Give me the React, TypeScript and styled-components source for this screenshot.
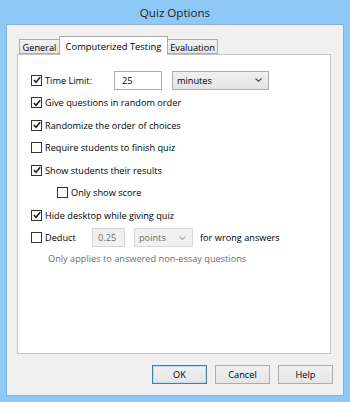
import styled, { createGlobalStyle } from 'styled-components';

const GlobalStyle = createGlobalStyle`
  html, body {
    margin: 0;
    padding: 0;
    background: #8ec8f7;
  }
  * {
    box-sizing: border-box;
  }
`;

const FONT = `"Open Sans", "Noto Sans", "DejaVu Sans", sans-serif`;

const Window = styled.div`
  display: flex;
  flex-direction: column;
  width: 350px;
  height: 402px;
  background: #8ec8f7;
  padding: 0 6px 6px 6px;
  font-family: ${FONT};
  font-size: 9.2px;
  color: #000;
`;

const TitleBar = styled.div`
  display: flex;
  align-items: center;
  justify-content: center;
  height: 24px;
  font-size: 11.6px;
  color: #1f1f1f;
  padding-top: 1px;
`;

const Client = styled.div`
  display: flex;
  flex-direction: column;
  flex: 1;
  background: #f0f0f0;
  border: 1px solid #7eb2df;
  padding: 11px 12px 0 10px;
`;

const TabStrip = styled.div`
  display: flex;
  align-items: flex-end;
  height: 18px;
  padding-left: 2px;
  position: relative;
  z-index: 1;
`;

const Tab = styled.div<{ $active?: boolean; $width: number }>`
  display: flex;
  align-items: center;
  justify-content: center;
  width: ${({ $width }) => $width}px;
  height: ${({ $active }) => ($active ? '19px' : '15px')};
  margin-bottom: ${({ $active }) => ($active ? '-1px' : '0')};
  background: ${({ $active }) => ($active ? '#fff' : 'linear-gradient(#f2f2f2, #e5e5e5)')};
  border: 1px solid #acacac;
  border-bottom: ${({ $active }) => ($active ? 'none' : '1px solid #acacac')};
  margin-left: ${({ $active }) => ($active ? '-1px' : '0')};
  margin-right: ${({ $active }) => ($active ? '-1px' : '0')};
  white-space: nowrap;
  padding-top: ${({ $active }) => ($active ? '0' : '2px')};
  font-size: ${({ $active }) => ($active ? '9.4px' : '9.2px')};
`;

const Panel = styled.div`
  display: flex;
  flex-direction: column;
  height: 300px;
  background: #fff;
  border: 1px solid #c4c4c4;
  padding: 14px 0 0 13px;
`;

const Row = styled.div<{ $indent?: number }>`
  display: flex;
  align-items: center;
  height: 22.5px;
  padding-left: ${({ $indent }) => $indent ?? 0}px;
  white-space: nowrap;
`;

const Box = styled.span`
  display: inline-flex;
  align-items: center;
  justify-content: center;
  width: 11px;
  height: 11px;
  border: 1px solid #333;
  background: #fff;
  margin-right: 3px;
  flex: none;
`;

const Label = styled.span<{ $width?: number }>`
  display: inline-block;
  width: ${({ $width }) => ($width ? `${$width}px` : 'auto')};
`;

const TextBox = styled.div<{ $width: number; $disabled?: boolean }>`
  display: flex;
  align-items: center;
  width: ${({ $width }) => $width}px;
  height: 19px;
  padding-left: ${({ $disabled }) => ($disabled ? '5px' : '7px')};
  border: 1px solid ${({ $disabled }) => ($disabled ? '#d6d6d6' : '#abadb3')};
  background: ${({ $disabled }) => ($disabled ? '#f0f0f0' : '#fff')};
  color: ${({ $disabled }) => ($disabled ? '#6d6d6d' : '#000')};
`;

const Select = styled.div<{ $width: number; $gap: number; $disabled?: boolean }>`
  display: flex;
  align-items: center;
  justify-content: space-between;
  width: ${({ $width }) => $width}px;
  height: 19px;
  margin-left: ${({ $gap }) => $gap}px;
  padding: 0 6px 0 4px;
  border: 1px solid ${({ $disabled }) => ($disabled ? '#d9d9d9' : '#acacac')};
  background: ${({ $disabled }) => ($disabled ? '#f0f0f0' : 'linear-gradient(#f0f0f0, #e5e5e5)')};
  color: ${({ $disabled }) => ($disabled ? '#6d6d6d' : '#000')};
`;

const Trailing = styled.span`
  margin-left: 7px;
`;

const Note = styled.div`
  display: flex;
  align-items: center;
  height: 18px;
  padding-left: 17px;
  color: #6d6d6d;
  white-space: nowrap;
`;

const ButtonRow = styled.div`
  display: flex;
  justify-content: flex-end;
  gap: 8px;
  margin-top: 11px;
  margin-right: -2px;
`;

const Button = styled.div<{ $default?: boolean }>`
  display: flex;
  align-items: center;
  justify-content: center;
  width: 55px;
  height: 19px;
  background: linear-gradient(#f0f0f0, #e5e5e5);
  border: 1px solid ${({ $default }) => ($default ? '#3c7fb1' : '#acacac')};
  box-shadow: ${({ $default }) => ($default ? 'inset 0 0 0 1px #c3dcf0' : 'none')};
`;

function Check({ checked }: { checked?: boolean }) {
  return (
    <Box>
      {checked && (
        <svg width="8" height="8" viewBox="0 0 8 8">
          <path d="M0.8 4 L3 6.3 L7.2 1.2" fill="none" stroke="#222" strokeWidth="1.6" />
        </svg>
      )}
    </Box>
  );
}

function Chevron({ color }: { color: string }) {
  return (
    <svg width="7" height="4" viewBox="0 0 7 4">
      <path d="M0.5 0.5 L3.5 3.3 L6.5 0.5" fill="none" stroke={color} strokeWidth="1.1" />
    </svg>
  );
}

export default function App(): JSX.Element {
  return (
    <>
      <GlobalStyle />
      <Window>
        <TitleBar>Quiz Options</TitleBar>
        <Client>
          <TabStrip>
            <Tab $width={41}>General</Tab>
            <Tab $active $width={109}>Computerized Testing</Tab>
            <Tab $width={51}>Evaluation</Tab>
          </TabStrip>
          <Panel>
            <Row>
              <Check checked />
              <Label $width={69}>Time Limit:</Label>
              <TextBox $width={48}>25</TextBox>
              <Select $width={97} $gap={10}>
                <span>minutes</span>
                <Chevron color="#444" />
              </Select>
            </Row>
            <Row>
              <Check checked />
              <Label>Give questions in random order</Label>
            </Row>
            <Row>
              <Check checked />
              <Label>Randomize the order of choices</Label>
            </Row>
            <Row>
              <Check />
              <Label>Require students to finish quiz</Label>
            </Row>
            <Row>
              <Check checked />
              <Label>Show students their results</Label>
            </Row>
            <Row $indent={26}>
              <Check />
              <Label>Only show score</Label>
            </Row>
            <Row>
              <Check checked />
              <Label>Hide desktop while giving quiz</Label>
            </Row>
            <Row>
              <Check />
              <Label $width={47}>Deduct</Label>
              <TextBox $width={33} $disabled>0.25</TextBox>
              <Select $width={59} $gap={9} $disabled>
                <span>points</span>
                <Chevron color="#a8a8a8" />
              </Select>
              <Trailing>for wrong answers</Trailing>
            </Row>
            <Note>Only applies to answered non-essay questions</Note>
          </Panel>
          <ButtonRow>
            <Button $default>OK</Button>
            <Button>Cancel</Button>
            <Button>Help</Button>
          </ButtonRow>
        </Client>
      </Window>
    </>
  );
}
